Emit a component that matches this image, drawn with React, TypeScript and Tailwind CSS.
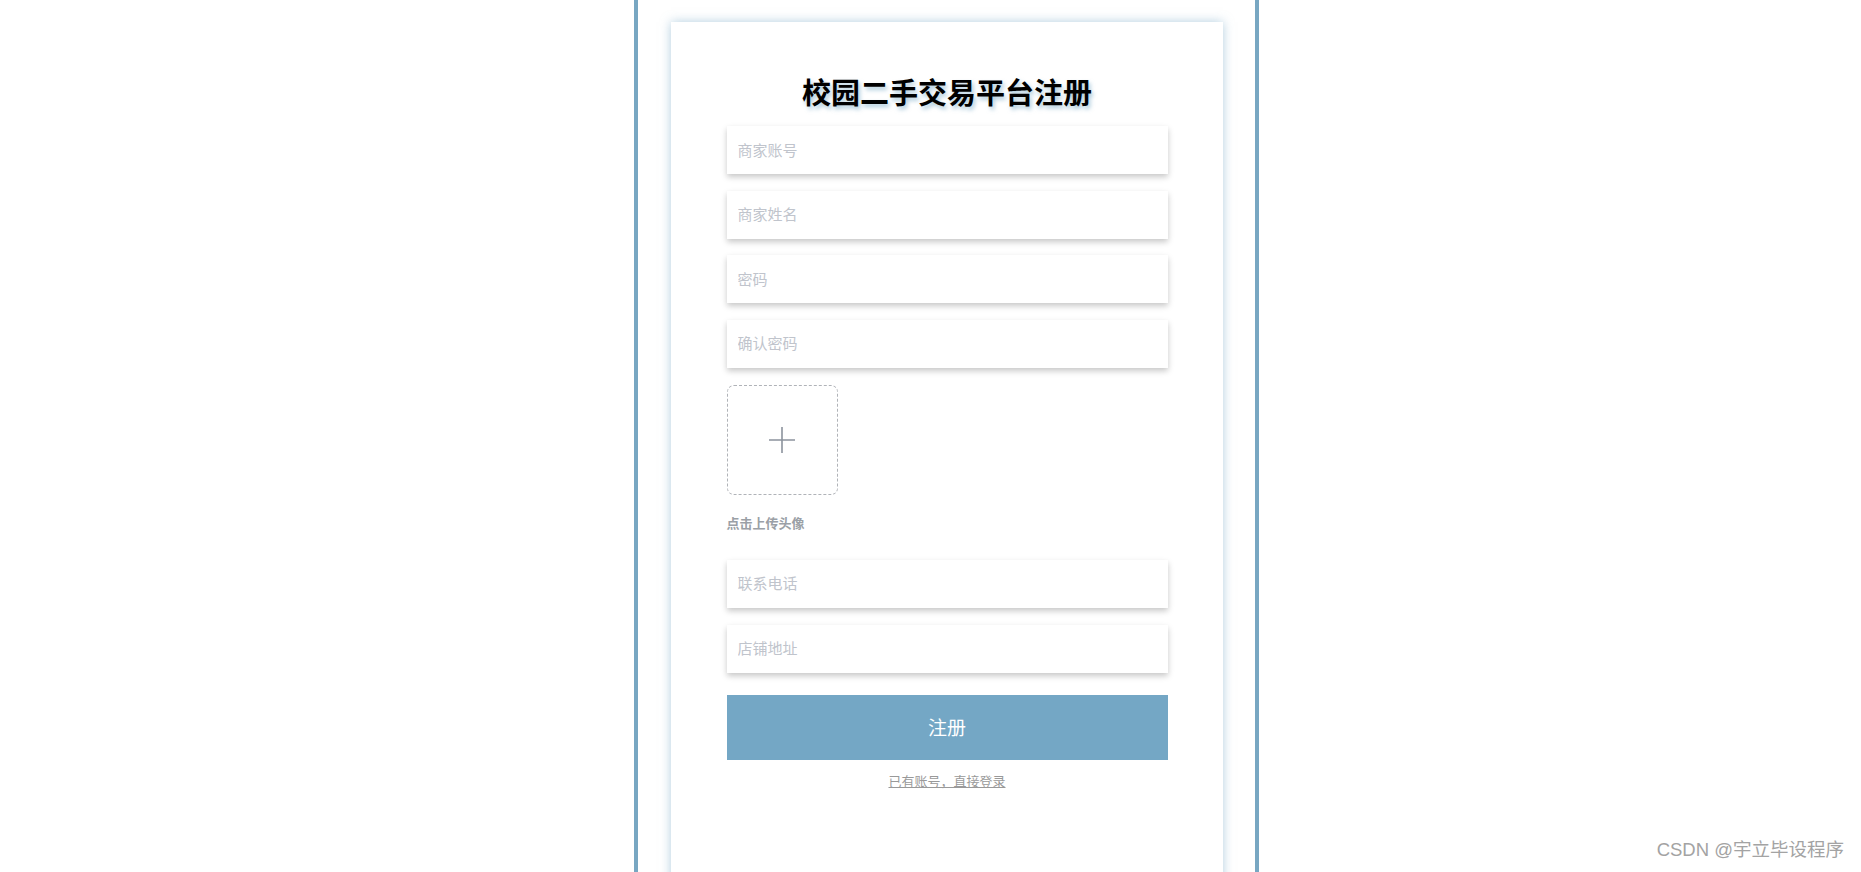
import React from 'react';

const fields = ['商家账号', '商家姓名', '密码', '确认密码'];
const fields2 = ['联系电话', '店铺地址'];

const inputClass =
  'block w-full h-12 px-[11px] pb-[2px] bg-white text-[15px] text-[#606266] outline-none shadow-[0_3px_6px_rgba(0,0,0,0.22)] placeholder:text-[#c0c4cc]';

export default function App() {
  return (
    <div className="relative h-[872px] overflow-hidden bg-white font-['Noto_Sans_CJK_SC',sans-serif]">
      <div className="ml-[634px] w-[625px] h-[1000px] border-x-4 border-[#78a7c2] pl-[33px] pt-[22px]">
        <div className="w-[552px] h-[1000px] bg-white shadow-[0_0_10px_rgba(115,166,197,0.55)] pt-[51px]">
          <h1 className="text-center text-[29px] leading-[36px] font-bold text-black [text-shadow:2px_3px_4px_rgba(115,166,197,0.6)] mb-[17px]">
            校园二手交易平台注册
          </h1>

          <form className="w-[441px] mx-auto" onSubmit={(e) => e.preventDefault()}>
            <div className="flex flex-col gap-[16.5px]">
              {fields.map((f) => (
                <input
                  key={f}
                  type={f.includes('密码') ? 'password' : 'text'}
                  placeholder={f}
                  className={inputClass}
                />
              ))}
            </div>

            {/* avatar upload */}
            <div className="mt-[17px] w-[111px] h-[110px] border border-dashed border-[#b0b3b8] rounded-[7px] flex items-center justify-center cursor-pointer">
              <svg width="30" height="30" viewBox="0 0 30 30">
                <path d="M15 2v26M2 15h26" stroke="#8c939d" strokeWidth="1.6" fill="none" />
              </svg>
            </div>
            <div className="mt-[18px] text-[13px] leading-5 font-semibold text-[#9aa0a6]">点击上传头像</div>

            <div className="mt-[27px] flex flex-col gap-[17px]">
              {fields2.map((f) => (
                <input key={f} type="text" placeholder={f} className={inputClass} />
              ))}
            </div>

            <button
              type="submit"
              className="mt-[22px] w-full h-[65px] bg-[#74a7c5] text-white text-[19px]"
            >
              注册
            </button>
            <div className="mt-[9px] text-center leading-5">
              <a href="#" className="text-[13px] text-[#999] underline">
                已有账号，直接登录
              </a>
            </div>
          </form>
        </div>
      </div>

      <div className="absolute right-[17px] bottom-[8px] text-[18.5px] text-[#a3a3a3] font-['Liberation_Sans','Noto_Sans_CJK_SC',sans-serif]">
        CSDN @宇立毕设程序
      </div>
    </div>
  );
}
